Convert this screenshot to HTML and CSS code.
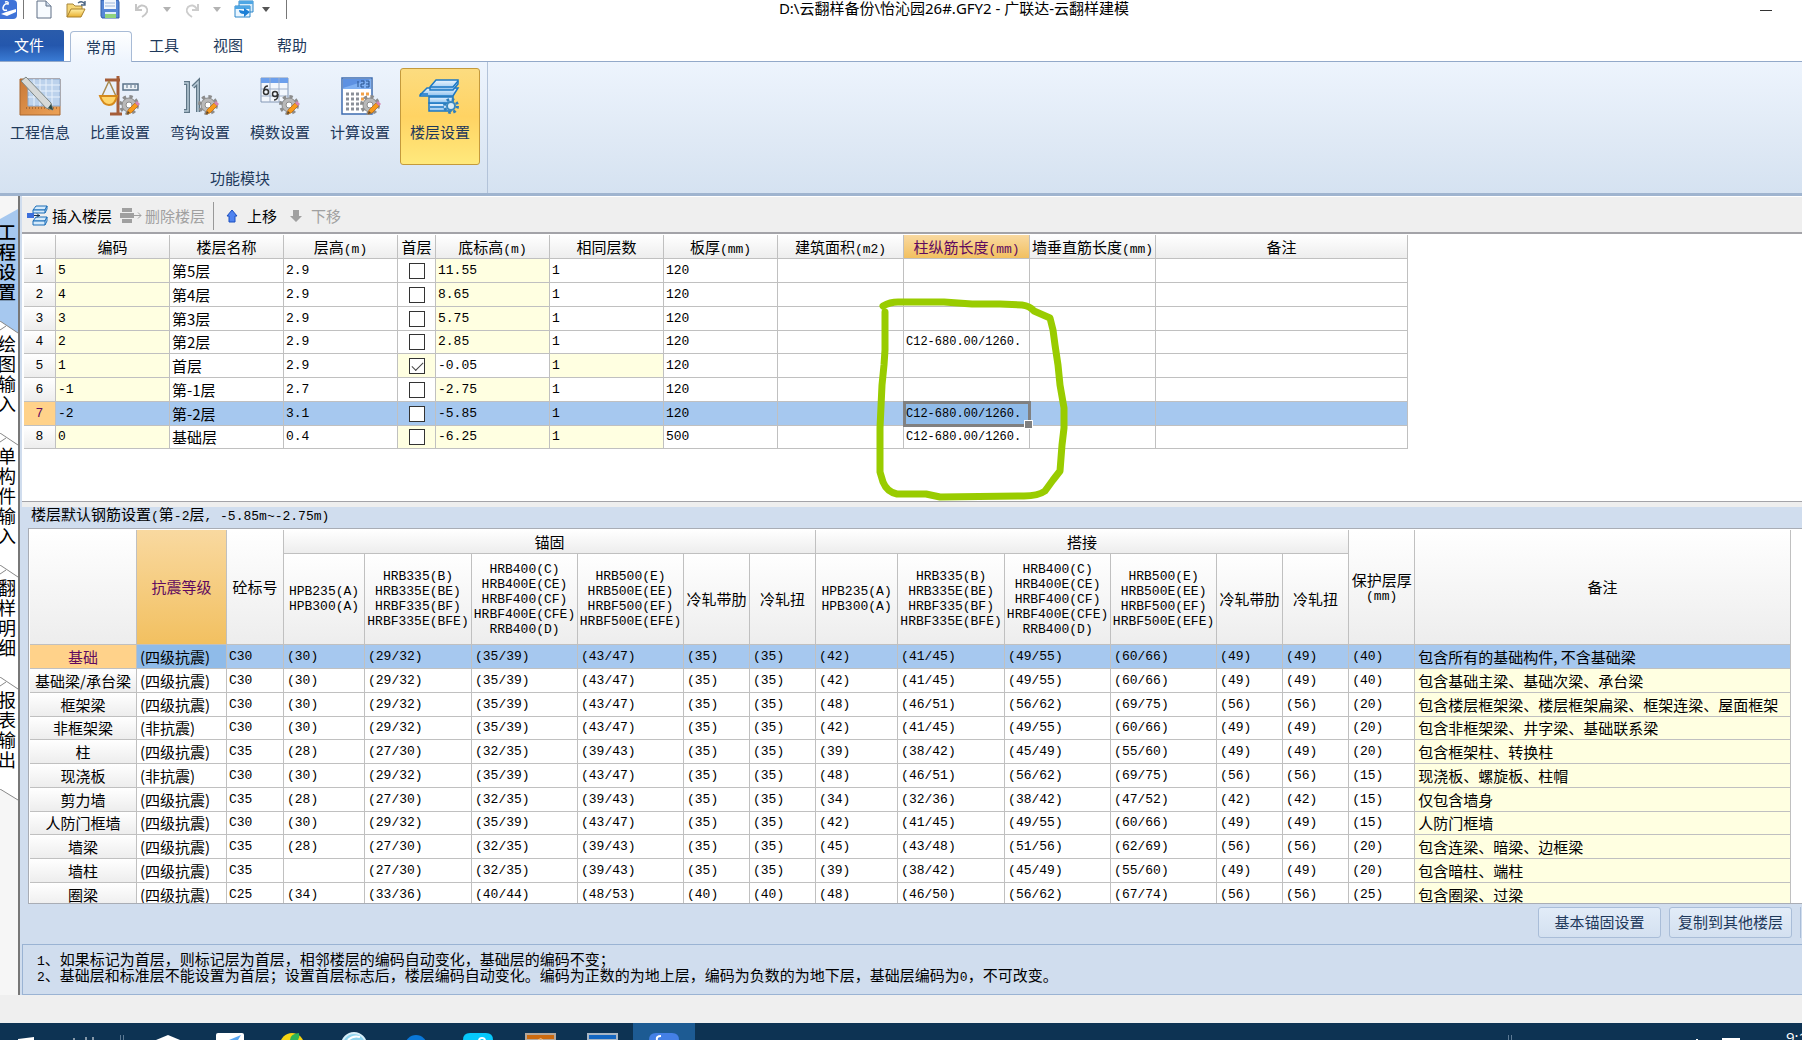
FILE: index.html
```html
<!DOCTYPE html>
<html lang="zh-CN">
<head>
<meta charset="utf-8">
<title>D:\云翻样备份\怡沁园26#.GFY2 - 广联达-云翻样建模</title>
<link rel="stylesheet" href="styles.css">
</head>
<body>
<svg class="defs" aria-hidden="true">
  <defs>
    <linearGradient id="gold" x1="0" y1="0" x2="0" y2="1"><stop offset="0" stop-color="#fff0a8"/><stop offset="1" stop-color="#e9b02f"/></linearGradient>
    <linearGradient id="wood" x1="0" y1="0" x2="1" y2="1"><stop offset="0" stop-color="#c8793a"/><stop offset="1" stop-color="#eda256"/></linearGradient>
    <linearGradient id="sky" x1="0" y1="0" x2="0" y2="1"><stop offset="0" stop-color="#eaf5ff"/><stop offset="1" stop-color="#8fc2ee"/></linearGradient>
    <g id="gear">
      <circle cx="10" cy="10" r="8" fill="none" stroke="#8c8c8c" stroke-width="4" stroke-dasharray="3.2 3.1"/>
      <circle cx="10" cy="10" r="7" fill="#b9b9b9" stroke="#8c8c8c"/>
      <circle cx="10" cy="10" r="3" fill="#fff" stroke="#8c8c8c"/>
      <path d="M8 19l1-4 7-7 3 3-7 7z" fill="#f79a1c" stroke="#b96a10" stroke-width=".7"/>
      <path d="M16 8l2-2 3 3-2 2z" fill="#d583b0"/><path d="M8 19l1-3 2 2z" fill="#5a4630"/>
    </g>
  </defs>
</svg>

<header class="titlebar">
  <div class="quick">
    <svg class="q-logo" width="17" height="20"><path d="M0 0h13q4 0 4 4v11q0 4-4 4H0z" fill="#3f73d8"/><path d="M5 2q4-1 3 2-4-1-5 4 0 3 4 2" fill="none" stroke="#fff" stroke-width="1.500"/><path d="M1 14l5-2 10-3v3l-9 4z" fill="#fff"/></svg>
    <i class="bar"></i>
    <button type="button" aria-label="新建"><svg width="16" height="20"><path d="M1 1h9l5 5v12H1z" fill="#f7fbff" stroke="#5f6f85"/><path d="M10 1v5h5" fill="#cfdcec" stroke="#5f6f85"/></svg></button>
    <button type="button" class="q-open" aria-label="打开"><svg width="22" height="20"><path d="M1 17V4h6l2 2h7v4" fill="#f6d778" stroke="#a8873b"/><path d="M1 17l4-8h14l-4 8z" fill="url(#gold)" stroke="#a8802c"/><path d="M12 3q4-3 7 1M19 1v4h-4" fill="none" stroke="#4a6482" stroke-width="1.4"/></svg></button>
    <button type="button" class="q-save" aria-label="保存"><svg width="20" height="20"><path d="M1 0h17l1 2v16H2l-1-2z" fill="#5687d6" stroke="#2f5da8"/><path d="M4 0h12v9H4z" fill="#f2f7fd"/><path d="M5 3h10M5 6h10" stroke="#9fb7da"/><path d="M5 12h11v6H5z" fill="#dfeefa"/><path d="M5 14h11v4H5z" fill="#8fd37c"/></svg></button>
    <button type="button" class="q-undo" aria-label="撤销" disabled><svg width="16" height="18"><path d="M2 3v6h6M3 8q4-6 9-2 4 5-4 10" fill="none" stroke="#c6c6c6" stroke-width="2"/></svg></button>
    <svg class="q-arrow" width="8" height="5"><path d="M0 0h8L4 5z" fill="#b3b3b3"/></svg>
    <button type="button" class="q-redo" aria-label="恢复" disabled><svg width="16" height="18"><path d="M14 3v6H8M13 8Q9 2 4 6q-4 5 4 10" fill="none" stroke="#cdcdcd" stroke-width="2"/></svg></button>
    <svg class="q-arrow" width="8" height="5"><path d="M0 0h8L4 5z" fill="#b3b3b3"/></svg>
    <button type="button" class="q-win" aria-label="切换窗口"><svg width="20" height="20"><path d="M5 1h14v11H5z" fill="#d6ecfb" stroke="#2d86c9"/><path d="M5 1h14v3H5z" fill="#4ea6e4"/><path d="M1 6h15v11H1z" fill="#e8f5ff" stroke="#2d86c9"/><path d="M1 6h15v3H1z" fill="#4ea6e4"/><path d="M5 10q0 4 5 4v3l6-5-6-4v3" fill="#1c7fd6"/></svg></button>
    <svg class="q-arrow" width="8" height="5"><path d="M0 0h8L4 5z" fill="#555"/></svg>
    <i class="bar q-end"></i>
  </div>
  <h1 class="title">D:\云翻样备份\怡沁园26#.GFY2 - 广联达-云翻样建模</h1>
  <div class="winctl"><button type="button" aria-label="最小化"><svg width="12" height="20"><path d="M0 10.500h12" stroke="#333"/></svg></button></div>
</header>

<nav class="tabs">
  <button type="button" class="tab file">文件</button>
  <button type="button" class="tab current">常用</button>
  <button type="button" class="tab">工具</button>
  <button type="button" class="tab">视图</button>
  <button type="button" class="tab">帮助</button>
</nav>

<section class="ribbon">
  <div class="group">
    <div class="tools">
      <button type="button" class="tool"><svg width="44" height="44"><path d="M2 4h40v36H2z" fill="url(#wood)" stroke="#a9672e"/><path d="M10 4h32v27H10z" fill="#bcd2ec" stroke="#8aa7cc"/><path d="M16 4v27M22 4v27M28 4v27M34 4v27M10 10h32M10 16h32M10 22h32" stroke="#e9f2fc"/><path d="M6 8l26 28M8 33h32" stroke="#7b4a1e" stroke-dasharray="1 2"/><path d="M3 6l5-4 25 26 2 7-7-2z" fill="#d6d9d8" stroke="#7d8684"/><path d="M30 33l5 2-2-6z" fill="#2d4b48"/></svg>工程信息</button>
      <button type="button" class="tool"><svg width="44" height="44"><path d="M12 39h12M20 1v37M7 5h15" fill="none" stroke="#a55d38" stroke-width="3"/><path d="M11 6L4 21M11 6l7 15" stroke="#a88a50" stroke-width="1.500"/><path d="M2 21h17q-2 9-8 9t-9-9z" fill="#ffd56b" stroke="#d68a1c" stroke-width="2"/><path d="M25 9h15v6H25z" fill="#edf3f8" stroke="#5b7389" stroke-width="1.500"/><path d="M29 10v3M33 10v3M37 10v3" stroke="#5b7389"/><use href="#gear" x="21" y="20"/></svg>比重设置</button>
      <button type="button" class="tool"><svg width="44" height="44"><path d="M6 8h4v28H6M15 12l5-5v30" fill="none" stroke="#5f7686" stroke-width="4"/><path d="M6 8h4v28H6M15 12l5-5v30" fill="none" stroke="#b9cbd8" stroke-width="1.500"/><use href="#gear" x="20" y="20"/></svg>弯钩设置</button>
      <button type="button" class="tool"><svg width="44" height="44"><path d="M3 3h27v24H3z" fill="#f3f7fd" stroke="#8397b5"/><path d="M3 3h27v5H3z" fill="#6c9fec"/><path d="M12 3v24M21 3v24M3 14h27M3 21h27" stroke="#9eafc9"/><circle cx="8" cy="17" r="2.500" fill="none" stroke="#333" stroke-width="1.500"/><path d="M6 16q0-5 4-5" fill="none" stroke="#333" stroke-width="1.500"/><circle cx="17" cy="19" r="2.500" fill="none" stroke="#333" stroke-width="1.500"/><path d="M20 19q0 6-4 6" fill="none" stroke="#333" stroke-width="1.500"/><use href="#gear" x="21" y="20"/></svg>模数设置</button>
      <button type="button" class="tool"><svg width="44" height="44"><path d="M4 3h30v36H4z" fill="#fff" stroke="#3e6cb0" stroke-width="1.500"/><path d="M5 4h28v10H5z" fill="#7fb0f2"/><path d="M5 4h28L5 13z" fill="#5d91e2"/><path d="M20 6v6M23 6h3v3h-3v3h3M28 6h3v6h-3M28 9h3" fill="none" stroke="#28528f"/><path d="M8 19h14M8 24h14M8 29h14M8 34h14" stroke="#8a8f98" stroke-width="3" stroke-dasharray="3 2"/><path d="M23 19h8M23 24h5" stroke="#f2a24a" stroke-width="3" stroke-dasharray="3 2"/><use href="#gear" x="22" y="20"/></svg>计算设置</button>
      <button type="button" class="tool active"><svg width="44" height="44"><g fill="url(#sky)" stroke="#1c78c4" stroke-width="1.500"><path d="M11 28h22v8H11z"/><path d="M11 22h24v6H11z"/><path d="M2 20l7-7h31l-5 8H2z"/><path d="M12 12l6-7h22v4l-5 6H12z"/></g><path d="M12 12h23l5-6M2 19h8M12 32h14" fill="none" stroke="#1c78c4" stroke-width="1.500"/><circle cx="33" cy="31" r="6.500" fill="none" stroke="#2f7fbd" stroke-width="3" stroke-dasharray="2.500 2.600"/><circle cx="33" cy="31" r="4" fill="#d9ecf8" stroke="#3a87bf" stroke-width="2"/></svg>楼层设置</button>
    </div>
    <div class="group-name">功能模块</div>
  </div>
</section>

<main class="workspace">
  <nav class="side">
    <button type="button" class="vtab on"><span>工<br>程<br>设<br>置</span></button>
    <button type="button" class="vtab"><svg class="slant" width="18" height="13"><path d="M0 0H18V12z"/><path d="M0 0L18 12M0 9l6-4"/></svg><span>绘<br>图<br>输<br>入</span></button>
    <button type="button" class="vtab long"><svg class="slant" width="18" height="13"><path d="M0 0L18 12M0 9l6-4"/></svg><span>单<br>构<br>件<br>输<br>入</span></button>
    <button type="button" class="vtab"><svg class="slant" width="18" height="13"><path d="M0 0L18 12M0 9l6-4"/></svg><span>翻<br>样<br>明<br>细</span></button>
    <button type="button" class="vtab"><svg class="slant" width="18" height="13"><path d="M0 0L18 12M0 9l6-4"/></svg><span>报<br>表<br>输<br>出</span></button>
    <svg class="side-end" width="18" height="13"><path d="M0 0H18V11z" fill="#fff"/><path d="M0 0L18 11" stroke="#888"/></svg>
  </nav>

  <div class="content">
    <div class="toolbar">
      <button type="button"><svg width="22" height="22"><g fill="#d5eafb" stroke="#1d6fb8"><path d="M6 5l3-4h11l-2 4z"/><path d="M6 5h12v3H6zM18 5l2-4v3l-2 4"/><path d="M6 16l3-4h11l-2 4z"/><path d="M6 16h12v4H6zM18 16l2-4v4l-2 4"/></g><path d="M0 8h7v5H0z" fill="#3c6fdc"/><path d="M7 10.500h6M10 8.500l2 2-2 2" fill="none" stroke="#16324f"/></svg>插入楼层</button>
      <button type="button" disabled><svg width="22" height="22"><path d="M2 3h10v4H2zM0 8h14v5H0zM2 14h10v4H2z" fill="#a0a0a0"/><path d="M14 10.500h7M18 7.500l3 3-3 3" fill="none" stroke="#a0a0a0"/></svg>删除楼层</button>
      <i class="bar"></i>
      <button type="button" class="move"><svg width="12" height="14"><path d="M6 1l5 6H9v6H3V7H1z" fill="#4f83f0" stroke="#1b4fc0"/></svg>上移</button>
      <button type="button" class="move" disabled><svg width="12" height="14"><path d="M6 13l6-6H9V1H3v6H0z" fill="#a0a0a0"/></svg>下移</button>
    </div>

    <section class="floors">
      <table class="grid floor-grid">
        <colgroup><col class="w32"><col class="w114"><col class="w114"><col class="w114"><col class="w38"><col class="w114"><col class="w114"><col class="w114"><col class="w126"><col class="w126"><col class="w126"><col class="w252"></colgroup>
        <thead><tr><th></th><th>编码</th><th>楼层名称</th><th>层高<span class="n">(m)</span></th><th>首层</th><th>底标高<span class="n">(m)</span></th><th>相同层数</th><th>板厚<span class="n">(mm)</span></th><th>建筑面积<span class="n">(m2)</span></th><th class="hot">柱纵筋长度<span class="n">(mm)</span></th><th>墙垂直筋长度<span class="n">(mm)</span></th><th>备注</th></tr></thead>
        <tbody>
          <tr><th>1</th><td class="y">5</td><td class="name">第5层</td><td>2.9</td><td class="chk"><input type="checkbox" aria-label="首层 1"></td><td class="y">11.55</td><td>1</td><td>120</td><td></td><td></td><td></td><td></td></tr>
          <tr><th>2</th><td class="y">4</td><td class="name">第4层</td><td>2.9</td><td class="chk"><input type="checkbox" aria-label="首层 2"></td><td class="y">8.65</td><td>1</td><td>120</td><td></td><td></td><td></td><td></td></tr>
          <tr><th>3</th><td class="y">3</td><td class="name">第3层</td><td>2.9</td><td class="chk"><input type="checkbox" aria-label="首层 3"></td><td class="y">5.75</td><td>1</td><td>120</td><td></td><td></td><td></td><td></td></tr>
          <tr><th>4</th><td class="y">2</td><td class="name">第2层</td><td>2.9</td><td class="chk"><input type="checkbox" aria-label="首层 4"></td><td class="y">2.85</td><td>1</td><td>120</td><td></td><td class="len">C12-680.00/1260.</td><td></td><td></td></tr>
          <tr><th>5</th><td class="y">1</td><td class="name">首层</td><td>2.9</td><td class="chk y"><input type="checkbox" aria-label="首层 5" checked></td><td>-0.05</td><td class="y">1</td><td>120</td><td></td><td></td><td></td><td></td></tr>
          <tr><th>6</th><td class="y">-1</td><td class="name">第-1层</td><td>2.7</td><td class="chk"><input type="checkbox" aria-label="首层 6"></td><td class="y">-2.75</td><td>1</td><td>120</td><td></td><td></td><td></td><td></td></tr>
          <tr class="sel"><th>7</th><td>-2</td><td class="name">第-2层</td><td>3.1</td><td class="chk"><input type="checkbox" aria-label="首层 7"></td><td>-5.85</td><td>1</td><td>120</td><td></td><td class="len focus">C12-680.00/1260.</td><td></td><td></td></tr>
          <tr><th>8</th><td class="y">0</td><td class="name">基础层</td><td>0.4</td><td class="chk y"><input type="checkbox" aria-label="首层 8"></td><td class="y">-6.25</td><td class="y">1</td><td>500</td><td></td><td class="len">C12-680.00/1260.</td><td></td><td></td></tr>
        </tbody>
      </table>
      <svg class="scribble" width="200" height="210" viewBox="870 295 200 210" aria-hidden="true"><path d="M883 306Q890 302 898 302L944 302 972 304 1000 304 1022 305Q1030 306 1034 311L1050 318 1053 330 1055 345 1058 365 1060 385 1064 408 1064 428 1062 445 1060 471 1053 480 1045 491Q1038 496 1024 496L940 497 926 494 897 494Q887 492 883 482L880 472 880 428 882 385 884 365 885 350 885 312"/></svg>
    </section>

    <section class="rebar">
      <h2 class="caption">楼层默认钢筋设置<span class="n">(</span>第<span class="n">-2</span>层<span class="n">, -5.85m~-2.75m)</span></h2>
      <div class="rebar-box">
        <table class="grid rebar-grid">
          <colgroup><col class="w107"><col class="w90"><col class="w57"><col class="w81"><col class="w107"><col class="w106"><col class="w106"><col class="w66"><col class="w66"><col class="w82"><col class="w107"><col class="w106"><col class="w106"><col class="w66"><col class="w66"><col class="w66"><col></colgroup>
          <thead>
            <tr><th rowspan="2"></th><th rowspan="2" class="hot">抗震等级</th><th rowspan="2">砼标号</th><th colspan="6">锚固</th><th colspan="6">搭接</th><th rowspan="2" class="wrap">保护层厚<br><span class="n">(mm)</span></th><th rowspan="2">备注</th></tr>
            <tr class="grades"><th>HPB235(A)<br>HPB300(A)</th><th>HRB335(B)<br>HRB335E(BE)<br>HRBF335(BF)<br>HRBF335E(BFE)</th><th>HRB400(C)<br>HRB400E(CE)<br>HRBF400(CF)<br>HRBF400E(CFE)<br>RRB400(D)</th><th>HRB500(E)<br>HRB500E(EE)<br>HRBF500(EF)<br>HRBF500E(EFE)</th><th class="zh">冷轧带肋</th><th class="zh">冷轧扭</th><th>HPB235(A)<br>HPB300(A)</th><th>HRB335(B)<br>HRB335E(BE)<br>HRBF335(BF)<br>HRBF335E(BFE)</th><th>HRB400(C)<br>HRB400E(CE)<br>HRBF400(CF)<br>HRBF400E(CFE)<br>RRB400(D)</th><th>HRB500(E)<br>HRB500E(EE)<br>HRBF500(EF)<br>HRBF500E(EFE)</th><th class="zh">冷轧带肋</th><th class="zh">冷轧扭</th></tr>
          </thead>
          <tbody>
            <tr class="sel"><th>基础</th><td class="focus-soft">(四级抗震)</td><td>C30</td><td>(30)</td><td>(29/32)</td><td>(35/39)</td><td>(43/47)</td><td>(35)</td><td>(35)</td><td>(42)</td><td>(41/45)</td><td>(49/55)</td><td>(60/66)</td><td>(49)</td><td>(49)</td><td>(40)</td><td>包含所有的基础构件, 不含基础梁</td></tr>
            <tr><th>基础梁/承台梁</th><td>(四级抗震)</td><td>C30</td><td>(30)</td><td>(29/32)</td><td>(35/39)</td><td>(43/47)</td><td>(35)</td><td>(35)</td><td>(42)</td><td>(41/45)</td><td>(49/55)</td><td>(60/66)</td><td>(49)</td><td>(49)</td><td>(40)</td><td>包含基础主梁、基础次梁、承台梁</td></tr>
            <tr><th>框架梁</th><td>(四级抗震)</td><td>C30</td><td>(30)</td><td>(29/32)</td><td>(35/39)</td><td>(43/47)</td><td>(35)</td><td>(35)</td><td>(48)</td><td>(46/51)</td><td>(56/62)</td><td>(69/75)</td><td>(56)</td><td>(56)</td><td>(20)</td><td>包含楼层框架梁、楼层框架扁梁、框架连梁、屋面框架</td></tr>
            <tr><th>非框架梁</th><td>(非抗震)</td><td>C30</td><td>(30)</td><td>(29/32)</td><td>(35/39)</td><td>(43/47)</td><td>(35)</td><td>(35)</td><td>(42)</td><td>(41/45)</td><td>(49/55)</td><td>(60/66)</td><td>(49)</td><td>(49)</td><td>(20)</td><td>包含非框架梁、井字梁、基础联系梁</td></tr>
            <tr><th>柱</th><td>(四级抗震)</td><td>C35</td><td>(28)</td><td>(27/30)</td><td>(32/35)</td><td>(39/43)</td><td>(35)</td><td>(35)</td><td>(39)</td><td>(38/42)</td><td>(45/49)</td><td>(55/60)</td><td>(49)</td><td>(49)</td><td>(20)</td><td>包含框架柱、转换柱</td></tr>
            <tr><th>现浇板</th><td>(非抗震)</td><td>C30</td><td>(30)</td><td>(29/32)</td><td>(35/39)</td><td>(43/47)</td><td>(35)</td><td>(35)</td><td>(48)</td><td>(46/51)</td><td>(56/62)</td><td>(69/75)</td><td>(56)</td><td>(56)</td><td>(15)</td><td>现浇板、螺旋板、柱帽</td></tr>
            <tr><th>剪力墙</th><td>(四级抗震)</td><td>C35</td><td>(28)</td><td>(27/30)</td><td>(32/35)</td><td>(39/43)</td><td>(35)</td><td>(35)</td><td>(34)</td><td>(32/36)</td><td>(38/42)</td><td>(47/52)</td><td>(42)</td><td>(42)</td><td>(15)</td><td>仅包含墙身</td></tr>
            <tr><th>人防门框墙</th><td>(四级抗震)</td><td>C30</td><td>(30)</td><td>(29/32)</td><td>(35/39)</td><td>(43/47)</td><td>(35)</td><td>(35)</td><td>(42)</td><td>(41/45)</td><td>(49/55)</td><td>(60/66)</td><td>(49)</td><td>(49)</td><td>(15)</td><td>人防门框墙</td></tr>
            <tr><th>墙梁</th><td>(四级抗震)</td><td>C35</td><td>(28)</td><td>(27/30)</td><td>(32/35)</td><td>(39/43)</td><td>(35)</td><td>(35)</td><td>(45)</td><td>(43/48)</td><td>(51/56)</td><td>(62/69)</td><td>(56)</td><td>(56)</td><td>(20)</td><td>包含连梁、暗梁、边框梁</td></tr>
            <tr><th>墙柱</th><td>(四级抗震)</td><td>C35</td><td></td><td>(27/30)</td><td>(32/35)</td><td>(39/43)</td><td>(35)</td><td>(35)</td><td>(39)</td><td>(38/42)</td><td>(45/49)</td><td>(55/60)</td><td>(49)</td><td>(49)</td><td>(20)</td><td>包含暗柱、端柱</td></tr>
            <tr><th>圈梁</th><td>(四级抗震)</td><td>C25</td><td>(34)</td><td>(33/36)</td><td>(40/44)</td><td>(48/53)</td><td>(40)</td><td>(40)</td><td>(48)</td><td>(46/50)</td><td>(56/62)</td><td>(67/74)</td><td>(56)</td><td>(56)</td><td>(25)</td><td>包含圈梁、过梁</td></tr>
          </tbody>
        </table>
      </div>
      <div class="actions">
        <button type="button">基本锚固设置</button>
        <button type="button">复制到其他楼层</button>
        <i class="cut"></i>
      </div>
    </section>

    <section class="tips">
      <p><span class="n">1</span>、如果标记为首层，则标记层为首层，相邻楼层的编码自动变化，基础层的编码不变；</p>
      <p><span class="n">2</span>、基础层和标准层不能设置为首层；设置首层标志后，楼层编码自动变化。编码为正数的为地上层，编码为负数的为地下层，基础层编码为<span class="n">0</span>，不可改变。</p>
    </section>
  </div>
</main>

<div class="status"></div>

<footer class="taskbar">
  <div class="start"><svg width="124" height="17"><path d="M18 16l16-2v3H18z" fill="#fff"/><path d="M74 15v2M86 14v3M93 14v3" stroke="#fff"/><path d="M120.500 12v5M123.500 12v5" stroke="#5d7a94"/></svg></div>
  <div class="apps">
    <svg width="62" height="17"><path d="M19 17l12-5 12 5z" fill="#fff"/></svg>
    <svg width="62" height="17"><path d="M17 17v-5q0-2 2-2h24q2 0 2 2v5z" fill="#fff"/><path d="M30 17l12-5-3 5z" fill="#5aa7f2"/></svg>
    <svg width="62" height="17"><circle cx="31" cy="22" r="12" fill="#f5d413"/><path d="M29 17q0-6 9-7 1 4-1 7z" fill="#2fb457"/></svg>
    <svg width="62" height="17"><circle cx="31" cy="22" r="12" fill="#8fd4ee" stroke="#d8eef8" stroke-width="2"/><path d="M25 17q5-5 12-3" fill="none" stroke="#fff" stroke-width="2"/></svg>
    <svg width="62" height="17"><circle cx="31" cy="23" r="11" fill="#0a78d8"/></svg>
    <svg width="62" height="17"><path d="M16 17q0-7 7-7h16q7 0 7 7z" fill="#06c8fb"/><circle cx="35" cy="18" r="3" fill="none" stroke="#fff" stroke-width="2"/></svg>
    <svg width="62" height="17"><path d="M17 17v-6h29v6z" fill="#cc6a0e" stroke="#b3a79b" stroke-width="2"/><path d="M29 17q3-3 5 0" fill="none" stroke="#f5c38c"/></svg>
    <svg width="62" height="17"><path d="M17 17v-6h29v6z" fill="#1467c2" stroke="#a9b6c4" stroke-width="2"/></svg>
    <svg class="running" width="62" height="17"><path d="M16 17q0-7 7-7h16q7 0 7 7z" fill="#4480e6"/><path d="M24 17q-1-4 4-4" fill="none" stroke="#fff" stroke-width="2"/></svg>
  </div>
  <div class="tray">
    <svg width="240" height="17"><path d="M.5 12v5M3.500 12v5" stroke="#5d7a94"/><path d="M188 16h2v1h-2zM214 15h18v2h-18z" fill="#fff"/></svg>
    <time>9:1</time>
  </div>
</footer>
</body>
</html>
```
FILE: styles.css
```css
:root {
  --zh: "Noto Sans CJK SC", sans-serif;
  --mono: "Liberation Mono", "Noto Sans CJK SC", monospace;
  --ink: #1e395b;
  --line: #c0c0c0;
}
* { box-sizing: border-box; }
html, body { height: 100%; }
body {
  margin: 0;
  display: flex;
  flex-direction: column;
  overflow: hidden;
  background: #fff;
  color: #000;
  font: 15px/20px var(--zh);
}
button {
  margin: 0;
  padding: 0;
  border: 0;
  background: none;
  color: inherit;
  font: inherit;
}
svg { display: block; flex: none; }
.defs { position: absolute; width: 0; height: 0; }
.n { font-family: var(--mono); font-size: 13px; line-height: 10px; }

/* title bar */
.titlebar { display: flex; height: 30px; flex: none; }
.quick { display: flex; width: 288px; height: 19px; align-items: center; }
.bar { width: 1px; height: 19px; background: #777; flex: none; }
.quick > .bar { margin: 0 12px 0 6px; }
.quick > .q-end { margin: 0 0 0 16px; }
.q-open { margin-left: 14px; }
.q-save { margin-left: 12px; }
.q-undo { margin-left: 14px; }
.q-redo { margin-left: 13px; }
.q-win { margin-left: 13px; }
.q-arrow { margin-left: 13px; }
.q-win + .q-arrow { margin-left: 8px; }
.title {
  flex: 1;
  margin: 0;
  text-align: center;
  font: 15px/16px "Noto Sans", var(--zh);
}
.winctl { width: 182px; display: flex; justify-content: flex-end; padding-right: 30px; }
.winctl button { height: 20px; }

/* ribbon tabs */
.tabs { display: flex; height: 32px; flex: none; align-items: flex-end; border-bottom: 1px solid #93a9c9; color: var(--ink); }
.tab { width: 64px; height: 31px; padding-bottom: 1px; }
.tab.file {
  margin-right: 6px;
  padding-right: 6px;
  border-radius: 0 3px 0 0;
  color: #fff;
  background: linear-gradient(#2a5cab, #2457ad 50%, #3a7bd4);
}
.tab.current {
  width: 62px;
  margin-bottom: -1px;
  border: 1px solid #a8bbd6;
  border-bottom: 0;
  border-radius: 4px 4px 0 0;
  background: linear-gradient(#fff, #edf4fd);
}

/* ribbon */
.ribbon {
  flex: none;
  height: 134px;
  display: flex;
  color: var(--ink);
  background: linear-gradient(#edf4fd, #dfe9f5 60%, #d5e2f1);
  border-bottom: 3px solid #9fb4cf;
}
.group { padding-top: 6px; width: 488px; border-right: 1px solid #b3c3d9; }
.tools { display: flex; }
.tool {
  width: 80px;
  height: 97px;
  border: 1px solid transparent;
  border-radius: 3px;
  display: flex;
  flex-direction: column;
  align-items: center;
  padding-top: 6px;
  line-height: 26px;
}
.tool.active { border-color: #c49a3c; background: linear-gradient(#fcdc80, #ffd363 50%, #ffe97c); }
.group-name { width: 480px; text-align: center; line-height: 26px; }

/* workspace */
.workspace { flex: 1; min-height: 0; display: flex; background: #d0ddee; }
.side { width: 20px; flex: none; background: #f6f6f6; border-right: 2px solid #777; padding-top: 13px; overflow: hidden; }
.vtab {
  position: relative;
  display: flex;
  align-items: flex-start;
  width: 18px;
  height: 112px;
  padding-top: 12px;
  background: #fff;
  font-size: 18px;
  text-align: left;
}
.vtab span { display: block; width: 18px; margin-left: -2px; }
.vtab.long { height: 132px; }
.vtab.on {
  font-weight: 500;
  background: #a6c8ef;
  clip-path: polygon(0 10px, 100% 0, 100% 100%, 0 100%);
}
.slant { position: absolute; left: 0; top: 0; fill: none; stroke: #888; }
.vtab.on + .vtab .slant path:first-child { fill: #a6c8ef; stroke: none; }
.content { flex: 1; min-width: 0; display: flex; flex-direction: column; padding-left: 2px; }
.toolbar {
  flex: none;
  height: 38px;
  display: flex;
  align-items: center;
  padding: 2px 0 0 5px;
  background: #efefef;
  border-top: 1px solid #fff;
  border-bottom: 2px solid #a3a3a8;
}
.toolbar button { display: flex; align-items: center; gap: 3px; margin-right: 8px; }
.toolbar button:disabled { color: #a0a0a0; }
.toolbar .bar { height: 28px; background: #999; margin-right: 12px; }
.toolbar .move { gap: 9px; margin-right: 13px; }

/* grids */
.grid { table-layout: fixed; border-collapse: separate; border-spacing: 0; }
.grid th, .grid td {
  padding: 0 0 0 3px;
  height: 24px;
  border: solid var(--line);
  border-width: 0 1px 1px 0;
  font-weight: 400;
  line-height: 20px;
  white-space: nowrap;
  overflow: hidden;
}
.grid th { padding: 0; text-align: center; background: linear-gradient(#fff, #ededed); }
.grid td { font-family: var(--mono); font-size: 13px; background: #fff; }
.grid tbody tr:nth-child(4n) > * { height: 23px; }
.grid thead .hot { color: #5f0a5f; background: linear-gradient(#f9d9a0, #f2c060); }
.grid td.y { background: #ffffe1; }
.grid tbody .sel td { background: #a6c8ef; }
.grid tbody .sel th { background: #ffd28a; color: #5f0a5f; }
.w32 { width: 32px; } .w38 { width: 38px; } .w57 { width: 57px; } .w66 { width: 66px; }
.w81 { width: 81px; } .w82 { width: 82px; } .w90 { width: 90px; } .w106 { width: 106px; }
.w107 { width: 107px; } .w114 { width: 114px; } .w126 { width: 126px; } .w252 { width: 252px; }

.floors {
  position: relative;
  flex: none;
  height: 268px;
  padding: 1px 0 0 2px;
  background: #fff;
  border-bottom: 1px solid #a3a3a8;
}
.floor-grid { width: 1384px; }
.floor-grid tbody th { font-family: var(--mono); font-size: 13px; }
.floor-grid td { padding-left: 2px; }
.floor-grid td.name { font-family: var(--zh); font-size: 15px; line-height: 18px; }
.floor-grid td.len { font-size: 12px; }
.grid td.chk { padding: 0; text-align: center; }
.chk input {
  appearance: none;
  display: block;
  width: 16px;
  height: 16px;
  margin: 0 auto;
  border: 1px solid #333;
  background: #fff;
}
.chk input:checked::after {
  content: "";
  display: block;
  width: 10px;
  height: 5px;
  margin: 3px 2px;
  border: solid #444;
  border-width: 0 0 1px 1px;
  rotate: -45deg;
}
.floor-grid tbody .sel .focus {
  position: relative;
  z-index: 1;
  overflow: visible;
  background: #8fbbe9;
  outline: 3px solid #808080;
  outline-offset: -2px;
}
.focus::after {
  content: "";
  position: absolute;
  right: -4px;
  bottom: -4px;
  width: 7px;
  height: 7px;
  border: 1px solid #fff;
  background: #808080;
}
.scribble {
  position: absolute;
  z-index: 2;
  left: 848px;
  top: 61px;
  overflow: visible;
  fill: none;
  stroke: #99cc00;
  stroke-width: 7;
  stroke-linecap: round;
  stroke-linejoin: round;
}

.rebar { flex: 1; min-height: 0; display: flex; flex-direction: column; border-top: 5px solid #eee; }
.caption { margin: 0; padding-left: 9px; font-size: 15px; font-weight: 400; line-height: 14px; height: 21px; flex: none; }
.rebar-box { flex: 1; min-height: 0; overflow: hidden; margin-left: 6px; padding: 1px 11px 0 1px; background: #fff; border: solid #a9adb5; border-width: 1px 0 1px 1px; }
.rebar-grid { width: 100%; }
.rebar-grid .grades th { height: 91px; font: 13px/15px var(--mono); }
.rebar-grid .grades .zh { font: 15px/20px var(--zh); }
.rebar-grid .wrap { line-height: 14px; }
.rebar-grid td:nth-child(2), .rebar-grid td:last-child { font-family: var(--zh); font-size: 15px; }
.rebar-grid td:nth-child(3) { padding-left: 2px; }
.rebar-grid tbody th, .rebar-grid td:last-child { line-height: 18px; }
.rebar-grid td:last-child { background: #ffffe1; }
.rebar-grid tbody .sel .focus-soft { background: #8fbbe9; }
.actions { flex: none; height: 40px; display: flex; justify-content: flex-end; gap: 8px; padding-top: 3px; }
.actions button {
  width: 123px;
  height: 31px;
  padding-bottom: 2px;
  border: 1px solid #a9bdd8;
  border-radius: 3px;
  color: var(--ink);
  background: linear-gradient(#e2ecf8, #d3e0f0);
}
.cut { width: 2px; height: 31px; border-left: 1px solid #a9bdd8; }

.tips { flex: none; height: 51px; border: solid #9ab3d3; border-width: 1px 0 1px 1px; padding: 6px 14px; line-height: 15px; }
.tips p { margin: 0; }

.status { flex: none; height: 28px; background: #efefef; }

/* taskbar */
.taskbar { flex: none; height: 17px; display: flex; overflow: hidden; background: #0d3353; color: #fff; }
.apps { display: flex; margin-left: 13px; }
.start { flex: none; }
.running { background: #1d5b93; }
.tray { margin-left: auto; display: flex; }
.tray svg { width: 278px; }
.tray time { width: 16px; overflow: hidden; white-space: nowrap; padding-top: 4px; font: 15px/20px "Open Sans", sans-serif; }
```
